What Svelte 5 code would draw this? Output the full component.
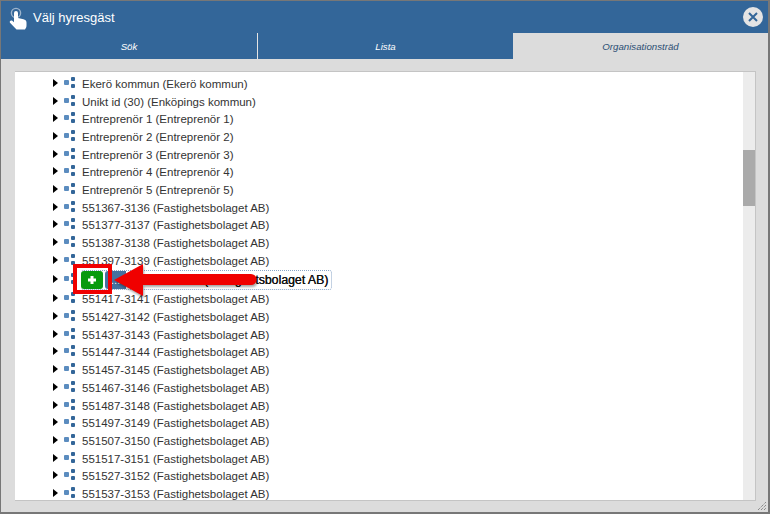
<script>
  const names = [
    'Ekerö kommun (Ekerö kommun)',
    'Unikt id (30) (Enköpings kommun)',
    'Entreprenör 1 (Entreprenör 1)',
    'Entreprenör 2 (Entreprenör 2)',
    'Entreprenör 3 (Entreprenör 3)',
    'Entreprenör 4 (Entreprenör 4)',
    'Entreprenör 5 (Entreprenör 5)'
  ];
  const ids = [
    '551367-3136', '551377-3137', '551387-3138', '551397-3139', '551407-3140',
    '551417-3141', '551427-3142', '551437-3143', '551447-3144', '551457-3145',
    '551467-3146', '551487-3148', '551497-3149', '551507-3150', '551517-3151',
    '551527-3152', '551537-3153'
  ];
  const rows = [...names, ...ids.map((id) => `${id} (Fastighetsbolaget AB)`)];
</script>

<div class="dialog">
  <header class="title">
    <svg class="hand" width="20" height="24" viewBox="0 0 20 24">
      <circle cx="7" cy="6" r="4.600" fill="none" stroke="#9db4cc" stroke-width="1.400" />
      <path d="M5 6a2 2 0 0 1 4 0v5l5.500 1.300c1.600.4 3 1.500 3 3.200v3c0 1.700-.7 2.800-1.500 4H7.500L1 15.800c-1-1.400.9-3.200 2.300-2L5 15.200z" fill="#fff" />
    </svg>
    <span>Välj hyresgäst</span>
    <button class="close" aria-label="Stäng">
      <svg width="10" height="10" viewBox="0 0 10 10">
        <path d="M1 1l8 8M9 1l-8 8" stroke="#336699" stroke-width="2" />
      </svg>
    </button>
  </header>

  <nav class="tabs">
    <div class="tab">Sök</div>
    <div class="tab">Lista</div>
    <div class="tab active">Organisationsträd</div>
  </nav>

  <main class="body">
    <div class="panel">
      <ul class="tree">
        {#each rows as row, i}
          <li class="row" class:current={i === 11}>
            <span class="caret"></span>
            <svg class="node" width="12" height="11" viewBox="0 0 12 11">
              <rect x="0" y="3" width="5" height="5" rx="1" fill="#5b8cbf" />
              <rect x="7" y="0" width="4" height="4" rx="1" fill="#336699" />
              <rect x="7" y="7" width="4" height="4" rx="1" fill="#336699" />
            </svg>
            {#if i === 11}
              <span class="selected">
                <span class="add">
                  <svg width="10" height="10" viewBox="0 0 10 10">
                    <path d="M5 1v8M1 5h8" stroke="#fff" stroke-width="3" />
                  </svg>
                </span>
                <span class="edit">...</span>
                <span class="sel-text">551407-3140 (Fastighetsbolaget AB)</span>
              </span>
            {:else}
              <span class="label">{row}</span>
            {/if}
          </li>
        {/each}
      </ul>
      <div class="scrollbar"><div class="thumb"></div></div>
    </div>
  </main>

  <svg class="grip" width="9" height="9" viewBox="0 0 9 9">
    <path d="M0 8l8-8M3 8l5-5M6 8l2-2" stroke="#666" stroke-dasharray="1 1" fill="none" />
  </svg>

  <!-- annotation drawn over the screenshot -->
  <div class="mark"></div>
  <svg class="arrow" width="146" height="38" viewBox="0 0 146 38">
    <path d="M0 16L29 0v10l108 0a5.500 5.500 0 0 1 0 11l-108 0v11z" fill="#f00000" />
  </svg>
</div>

<style>
  :global(body) {
    margin: 0;
  }
  .dialog {
    position: relative;
    width: 770px;
    height: 514px;
    box-sizing: border-box;
    border: 1px solid #777;
    border-right-width: 2px;
    border-bottom-width: 2px;
    display: flex;
    flex-direction: column;
    background: #dcdcdc;
    font-family: 'Liberation Sans', Arial, sans-serif;
    overflow: hidden;
  }
  .title {
    height: 32px;
    flex: none;
    display: flex;
    align-items: center;
    padding: 0 5px 0 8px;
    background: #336699;
    color: #fff;
    font-size: 13px;
  }
  .hand {
    margin-right: 4px;
    margin-top: 3px;
  }
  .close {
    margin-left: auto;
    width: 20px;
    height: 20px;
    padding: 0;
    border: 0;
    border-radius: 50%;
    background: #e4e4e4;
    display: flex;
    align-items: center;
    justify-content: center;
  }
  .tabs {
    height: 26px;
    flex: none;
    display: flex;
    background: #336699;
  }
  .tab {
    width: 257px;
    box-sizing: border-box;
    border-right: 1px solid #e4e4e4;
    display: flex;
    align-items: center;
    justify-content: center;
    color: #fff;
    font-size: 9.700px;
    font-style: italic;
  }
  .tab:nth-child(2) {
    width: 255px;
    border-right: 0;
  }
  .tab.active {
    flex: 1;
    border-right: 0;
    background: #dcdcdc;
    color: #2a4d73;
  }
  .body {
    flex: 1;
    min-height: 0;
    padding: 12px 12px 11px 14px;
    display: flex;
  }
  .panel {
    flex: 1;
    min-width: 0;
    position: relative;
    display: flex;
    background: #fff;
    border-right: 1px solid #c4c4c4;
    border-top: 1px solid #c4c4c4;
    border-bottom: 1px solid #c4c4c4;
    overflow: hidden;
  }
  .tree {
    flex: 1;
    margin: 0;
    padding: 3px 0 0 38px;
    list-style: none;
    overflow: hidden;
  }
  .row {
    height: 17.700px;
    display: flex;
    align-items: center;
    color: #333;
    font-size: 11.500px;
    white-space: nowrap;
  }
  .row.current {
    height: 21px;
  }
  .caret {
    width: 0;
    height: 0;
    border-left: 5px solid #000;
    border-top: 4.500px solid transparent;
    border-bottom: 4.500px solid transparent;
    margin-right: 6px;
    margin-top: -2px;
  }
  .node {
    margin-right: 6px;
    margin-top: -3px;
  }
  .label {
    line-height: 14px;
  }
  .selected {
    position: relative;
    display: flex;
    align-items: center;
    height: 20px;
    margin-left: -1px;
    border: 1px dotted #8aa6c8;
    border-left: 0;
    border-radius: 3px;
    box-sizing: border-box;
    color: #111;
  }
  .add {
    width: 22px;
    height: 18px;
    border-radius: 3px;
    background: #079a0f;
    display: flex;
    align-items: center;
    justify-content: center;
  }
  .edit {
    width: 21px;
    height: 18px;
    margin-left: 2px;
    border-radius: 3px 0 0 3px;
    background: #45719f;
    color: #fff;
    line-height: 18px;
    text-align: center;
  }
  .sel-text {
    padding: 0 3px 0 2px;
    font-size: 12.300px;
    text-shadow: 0.3px 0 0 #111;
  }
  .scrollbar {
    width: 12px;
    flex: none;
    margin-left: auto;
    background: #ececec;
    position: relative;
  }
  .thumb {
    position: absolute;
    left: 0;
    top: 78px;
    width: 100%;
    height: 56px;
    background: #aaa;
  }
  .grip {
    position: absolute;
    right: 1px;
    bottom: 1px;
  }
  .mark {
    position: absolute;
    left: 72px;
    top: 263px;
    width: 39px;
    height: 30px;
    box-sizing: border-box;
    border: 4px solid #f00000;
  }
  .arrow {
    position: absolute;
    left: 113px;
    top: 263px;
    filter: drop-shadow(1px 2px 1px rgba(0, 0, 0, 0.35));
  }
</style>
